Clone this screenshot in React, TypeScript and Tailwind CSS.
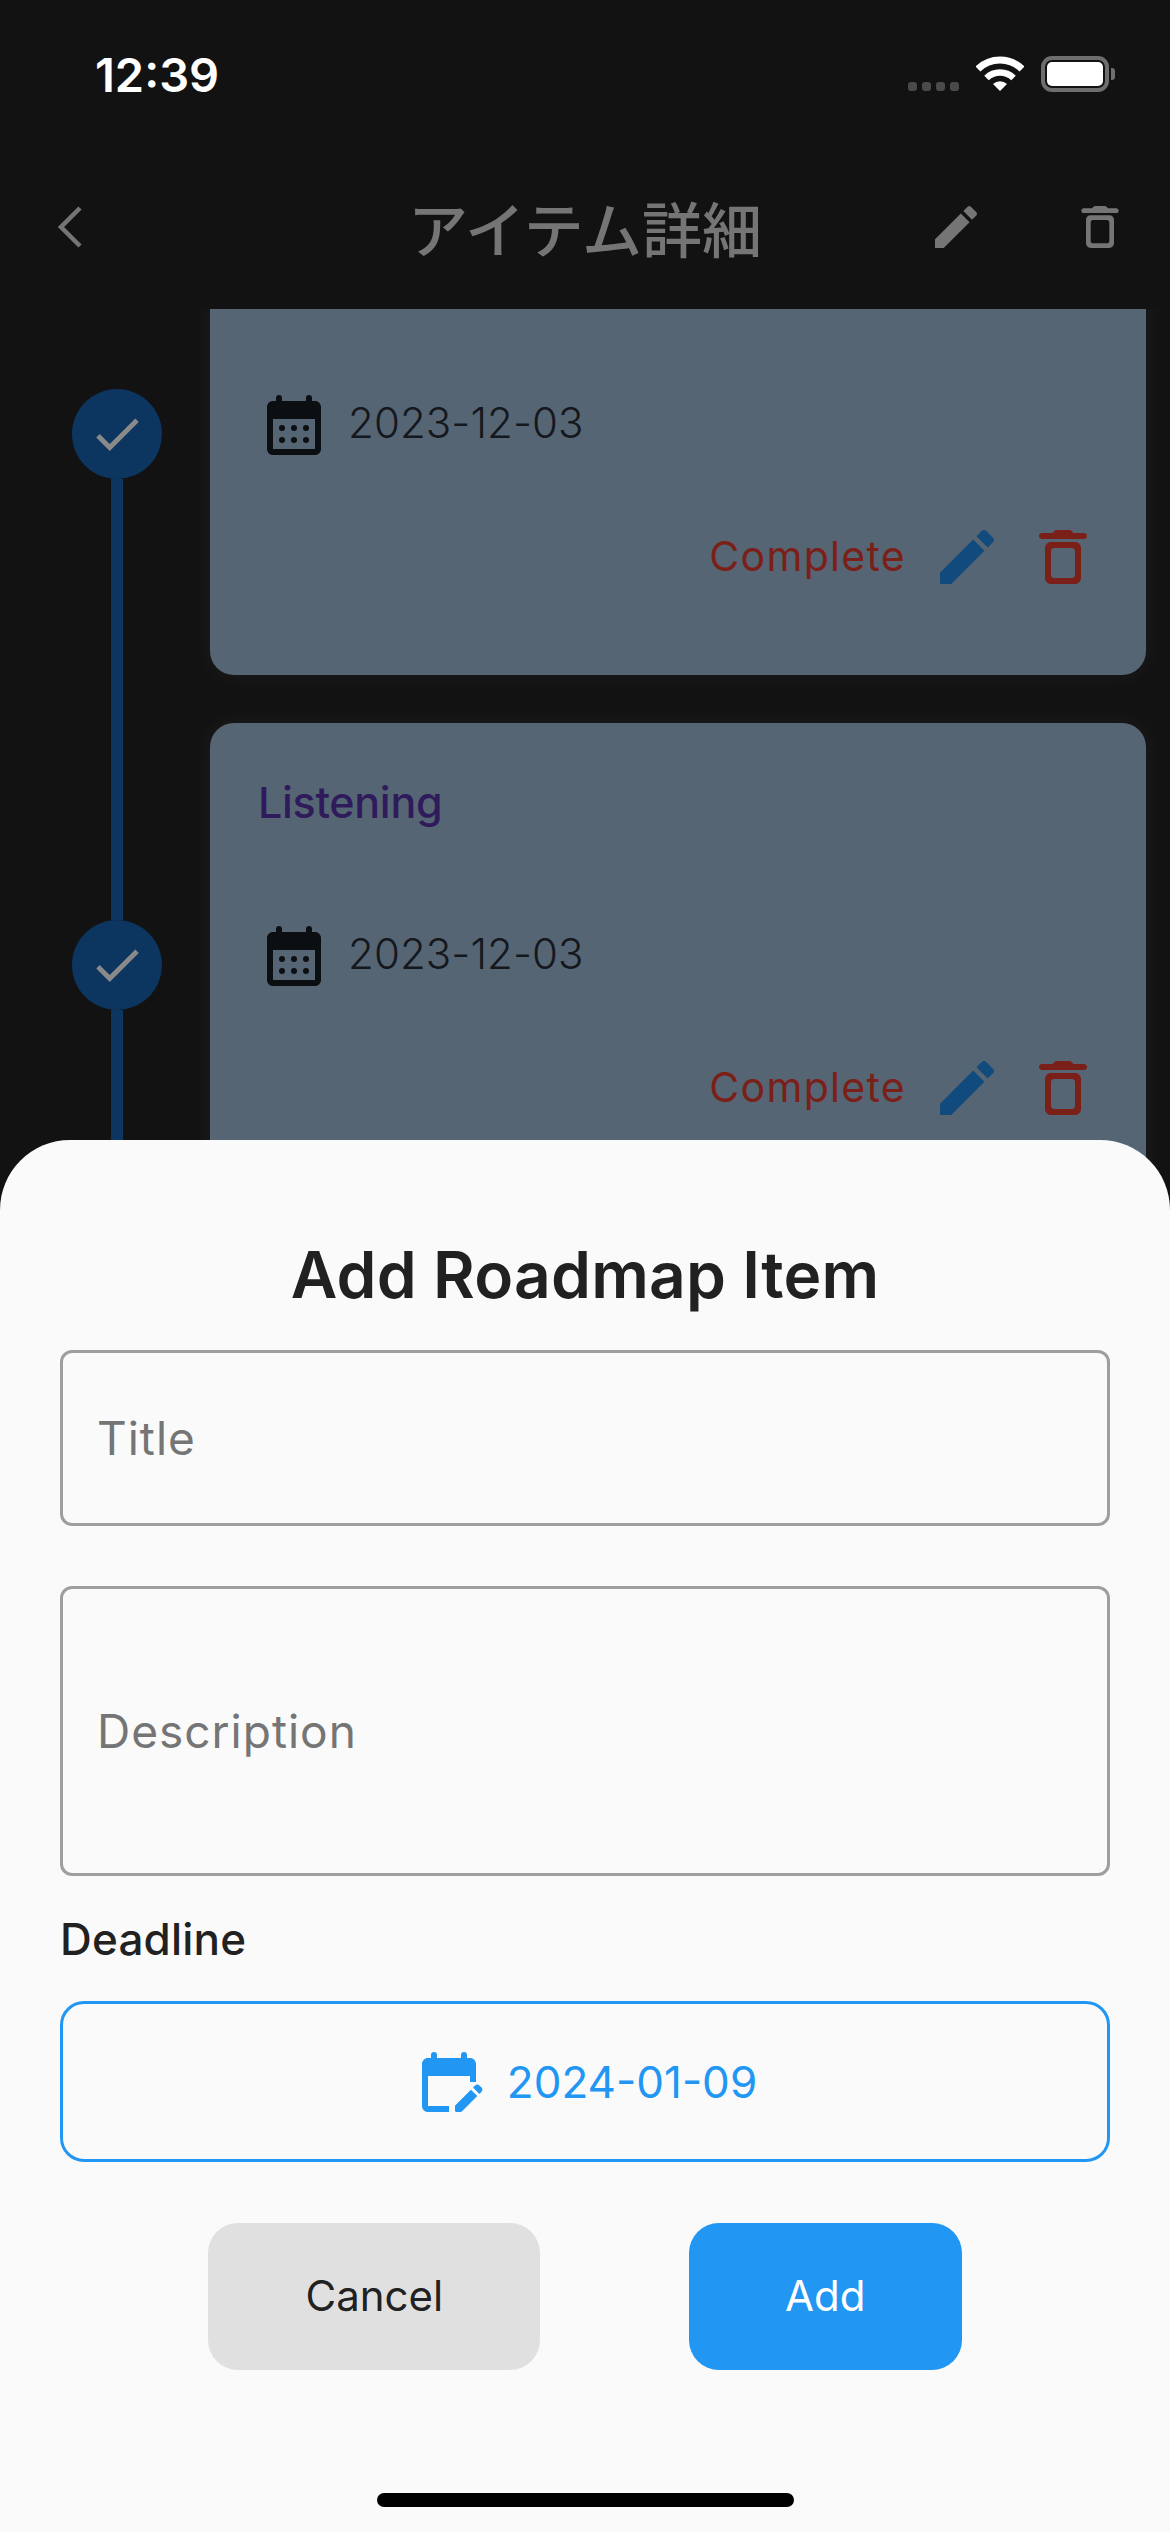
const POPPINS = "font-['Inter',sans-serif]"

const CalendarIcon = ({ className }: { className?: string }) => (
  <svg viewBox="0 0 24 24" className={className} fill="currentColor">
    <path
      fillRule="evenodd"
      d="M19 4h-1V3a1 1 0 0 0-2 0v1H8V3a1 1 0 0 0-2 0v1H5c-1.11 0-2 .9-2 2v14c0 1.1.9 2 2 2h14c1.1 0 2-.9 2-2V6c0-1.1-.9-2-2-2zm0 16H5V10h14v10z"
    />
    <circle cx="8" cy="13" r="1" />
    <circle cx="12" cy="13" r="1" />
    <circle cx="16" cy="13" r="1" />
    <circle cx="8" cy="17" r="1" />
    <circle cx="12" cy="17" r="1" />
    <circle cx="16" cy="17" r="1" />
  </svg>
)

const EditCalendarIcon = ({ className }: { className?: string }) => (
  <svg viewBox="0 0 24 24" className={className} fill="currentColor">
    <path d="M5 10h14v2h2V6c0-1.1-.9-2-2-2h-1V3a1 1 0 0 0-2 0v1H8V3a1 1 0 0 0-2 0v1H5C3.89 4 3 4.9 3 6v14c0 1.1.89 2 2 2h7v-2H5V10z" />
    <path d="M22.84 15.28l-.71.71-2.12-2.12.71-.71c.39-.39 1.02-.39 1.41 0l.71.71c.39.39.39 1.02 0 1.41zM19.3 14.58l2.12 2.12-5.15 5.15a.5.5 0 0 1-.35.15H14.5a.5.5 0 0 1-.5-.5v-1.42c0-.13.05-.26.15-.35l5.15-5.15z" />
  </svg>
)

const EditIcon = ({ className }: { className?: string }) => (
  <svg viewBox="0 0 24 24" className={className} fill="currentColor">
    <path d="M3 17.25V21h3.75L17.81 9.94l-3.75-3.75L3 17.25zM20.71 7.04c.39-.39.39-1.02 0-1.41l-2.34-2.34c-.39-.39-1.02-.39-1.41 0l-1.83 1.83 3.75 3.75 1.83-1.83z" />
  </svg>
)

const TrashIcon = ({ className }: { className?: string }) => (
  <svg viewBox="0 0 24 24" className={className} fill="currentColor">
    <path
      fillRule="evenodd"
      d="M6 19c0 1.1.9 2 2 2h8c1.1 0 2-.9 2-2V9c0-1.1-.9-2-2-2H8c-1.1 0-2 .9-2 2v10zM9 9h6c.55 0 1 .45 1 1v8c0 .55-.45 1-1 1H9c-.55 0-1-.45-1-1v-8c0-.55.45-1 1-1z"
    />
    <path d="M15.5 4l-.71-.71c-.18-.18-.44-.29-.7-.29H9.91c-.26 0-.52.11-.7.29L8.5 4H5c-.55 0-1 .45-1 1s.45 1 1 1h14c.55 0 1-.45 1-1s-.45-1-1-1h-3.5z" />
  </svg>
)

const StatusBar = () => (
  <div className="h-[144px] pt-[52px] pl-[95px] pr-[55px] flex justify-between items-start">
    <span className="h-[46px] leading-[46px] text-[47px] font-semibold text-white font-['Inter',sans-serif]">12:39</span>
    <div className="h-[40px] flex items-end">
      <div className="flex gap-[5px] mb-[1px]">
        <div className="w-[9px] h-[9px] rounded-[3px] bg-[#4a4a4a]" />
        <div className="w-[9px] h-[9px] rounded-[3px] bg-[#4a4a4a]" />
        <div className="w-[9px] h-[9px] rounded-[3px] bg-[#4a4a4a]" />
        <div className="w-[9px] h-[9px] rounded-[3px] bg-[#4a4a4a]" />
      </div>
      <svg viewBox="0 0 48 36" className="w-[48px] h-[36px] ml-[17px] mb-[1px]" fill="none" stroke="white">
        <path d="M2 14 A31.5 31.5 0 0 1 46 14" strokeWidth="7" />
        <path d="M10.5 23 A19.5 19.5 0 0 1 37.5 23" strokeWidth="6.5" />
        <path d="M24 36 L17 29 A10 10 0 0 1 31 29 Z" fill="white" stroke="none" />
      </svg>
      <div className="flex items-center ml-[17px]">
        <div className="w-[68px] h-[36px] border-[4px] border-[#6e6e6e] rounded-[11px] p-[2px]">
          <div className="w-full h-full bg-white rounded-[5px]" />
        </div>
        <div className="w-[4px] h-[12px] bg-[#6e6e6e] rounded-r-[3px] ml-[2px]" />
      </div>
    </div>
  </div>
)

const AppBar = () => (
  <div className="h-[165px] grid grid-cols-[1fr_auto_1fr] items-center text-[#757575]">
    <div className="pl-[57px]">
      <svg viewBox="0 0 25 42" className="w-[25px] h-[42px]" fill="none" stroke="currentColor" strokeWidth="4.5">
        <path d="M23 2 L4 21 L23 40" />
      </svg>
    </div>
    <h1 className="text-[60px] leading-none font-medium font-['Noto_Sans_CJK_JP',sans-serif]">アイテム詳細</h1>
    <div className="flex justify-end items-center gap-[88px] pr-[42px]">
      <EditIcon className="w-[56px] h-[56px]" />
      <TrashIcon className="w-[56px] h-[56px]" />
    </div>
  </div>
)

const ROADMAP = [
  { id: 1, title: 'Intro', date: '2023-12-03', first: true },
  { id: 2, title: 'Listening', date: '2023-12-03', first: false },
]

const RoadmapRow = ({ title, date, first }: { title: string; date: string; first: boolean }) => (
  <div className="flex h-[531px]">
    <div className="w-[210px] pl-[72px] shrink-0">
      <div className="w-[90px] h-full flex flex-col items-center">
        <div className={first ? 'flex-1 w-[12px]' : 'flex-1 w-[12px] bg-[#0c3560]'} />
        <div className="w-[90px] h-[90px] rounded-full bg-[#0c3560] flex items-center justify-center text-[#8a8a8a]">
          <svg viewBox="0 0 24 24" className="w-[58px] h-[58px]" fill="currentColor">
            <path d="M9 16.17 4.83 12l-1.42 1.41L9 19 21 7l-1.41-1.41z" />
          </svg>
        </div>
        <div className="flex-1 w-[12px] bg-[#0c3560]" />
      </div>
    </div>
    <div className="my-[24px] w-[936px] rounded-[24px] bg-[#566573] shadow-[0_0_24px_rgba(255,255,255,0.05)] pl-[48px] pr-[47px] relative">
      <div className={`pt-[49px] h-[118px] text-[43px] leading-[60px] font-medium tracking-[-0.3px] text-[#2f1b5c] ${POPPINS}`}>{first ? '' : title}</div>
      <div className="h-[118px] mt-[79px] flex items-start gap-[18px]">
        <CalendarIcon className="w-[72px] h-[72px] text-[#0b0f12] shrink-0" />
        <span className={`text-[42px] leading-[60px] mt-[4px] tracking-[0.1px] font-light text-[#14181c] ${POPPINS}`}>{date}</span>
      </div>
      <div className="flex justify-end items-center mt-[14px]">
        <span className="text-[41px] tracking-[1.3px] text-[#7a2018] mr-[25px] font-['Inter',sans-serif]">Complete</span>
        <EditIcon className="w-[72px] h-[72px] text-[#114b7d]" />
        <TrashIcon className="w-[72px] h-[72px] text-[#7a2018] ml-[24px]" />
      </div>
    </div>
  </div>
)

const OutlineField = ({ label, className }: { label: string; className: string }) => (
  <div className={`border-[3px] border-[#9e9e9e] rounded-[12px] flex items-center pl-[34px] text-[46px] tracking-[1px] text-[#757575] font-['Inter',sans-serif] ${className}`}>
    {label}
  </div>
)

const AddItemSheet = () => (
  <div className="absolute left-0 right-0 bottom-0 h-[1392px] bg-[#fafafa] rounded-t-[70px] px-[60px] flex flex-col">
    <h2 className={`mt-[100px] h-[110px] text-center text-[64px] leading-[70px] font-semibold tracking-[0.2px] text-[#212121] ${POPPINS}`}>Add Roadmap Item</h2>
    <OutlineField label="Title" className="h-[176px]" />
    <OutlineField label="Description" className="h-[290px] mt-[60px]" />
    <div className={`mt-[37px] h-[52px] text-[44px] leading-[52px] font-medium tracking-[0.2px] text-[#212121] ${POPPINS}`}>Deadline</div>
    <div className="mt-[36px] h-[161px] border-[3px] border-[#2196f3] rounded-[24px] flex items-center justify-center gap-[22px] text-[#2196f3]">
      <EditCalendarIcon className="w-[72px] h-[72px]" />
      <span className="text-[44px] font-['Inter',sans-serif]">2024-01-09</span>
    </div>
    <div className="mt-[61px] flex justify-evenly text-[42px] font-['Inter',sans-serif]">
      <div className="w-[332px] h-[147px] pb-[2px] rounded-[30px] bg-[#e0e0e0] text-[#212121] flex items-center justify-center">Cancel</div>
      <div className="w-[273px] h-[147px] pb-[2px] rounded-[30px] bg-[#2196f3] text-white flex items-center justify-center">Add</div>
    </div>
    <div className="w-[417px] h-[14px] rounded-full bg-black mt-[123px] ml-[317px]" />
  </div>
)

export default function App() {
  return (
    <div className="relative w-[1170px] h-[2532px] bg-[#121212] overflow-hidden">
      <StatusBar />
      <AppBar />
      <div className="h-[2223px] overflow-hidden">
        <div className="-mt-[141px]">
          {ROADMAP.map((item) => (
            <RoadmapRow key={item.id} title={item.title} date={item.date} first={item.first} />
          ))}
        </div>
      </div>
      <AddItemSheet />
    </div>
  )
}
